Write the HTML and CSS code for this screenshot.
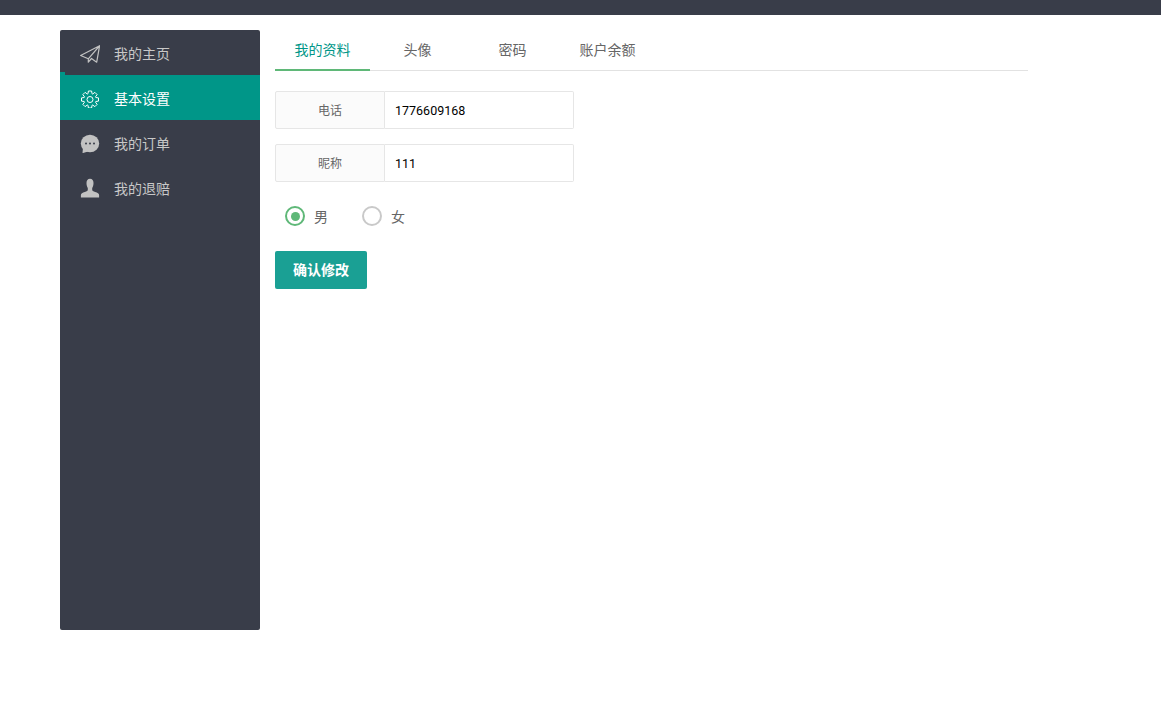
FILE: index.html
```html
<!DOCTYPE html>
<html lang="zh-CN">
<head>
    <meta charset="UTF-8">
    <title>基本设置</title>
    <link rel="stylesheet" href="styles.css">
</head>
<body>
    <div class="topbar"></div>

    <div class="wrapper">
        <ul class="side-nav">
            <li class="side-item">
                <svg class="side-icon" viewBox="0 0 20 20"><path d="M19.6 2.700 .6 12.500 8.300 15.800 19.600 2.700 16.700 19.200 11.500 15.500 8.300 19.200V15.800" fill="none" stroke="#c2c2c2" stroke-width="1.200" stroke-linejoin="round"/></svg>
                <span>我的主页</span>
            </li>
            <li class="side-item active">
                <svg class="side-icon" viewBox="0 0 20 20"><polygon transform="translate(10 11.500)" points="-2,-5.800 -1.600,-8.500 1.600,-8.500 2,-5.800 2.690,-5.510 4.880,-7.140 7.140,-4.880 5.510,-2.690 5.800,-2 8.500,-1.600 8.500,1.600 5.800,2 5.510,2.690 7.140,4.880 4.880,7.140 2.690,5.510 2,5.800 1.600,8.500 -1.600,8.500 -2,5.800 -2.690,5.510 -4.880,7.140 -7.140,4.880 -5.510,2.690 -5.800,2 -8.500,1.600 -8.500,-1.600 -5.800,-2 -5.510,-2.690 -7.140,-4.880 -4.880,-7.140 -2.690,-5.510" fill="none" stroke="#fff" stroke-width="1" stroke-linejoin="round"/><circle cx="10" cy="11.500" r="3" fill="none" stroke="#fff" stroke-width="1"/></svg>
                <span>基本设置</span>
            </li>
            <li class="side-item">
                <svg class="side-icon" viewBox="0 0 20 20"><ellipse cx="10" cy="10.500" rx="9.200" ry="8.800" fill="#c2c2c2"/><path d="M3 14.500 2.500 20.200 8 18.500Z" fill="#c2c2c2"/><circle cx="6" cy="10.500" r="1" fill="#393d49"/><circle cx="10" cy="10.500" r="1" fill="#393d49"/><circle cx="14" cy="10.500" r="1" fill="#393d49"/></svg>
                <span>我的订单</span>
            </li>
            <li class="side-item">
                <svg class="side-icon" viewBox="0 0 20 20"><path d="M10 .8c2.300 0 3.500 1.700 3.500 4.300 0 2-.5 3.800-1.300 5V12c0 .9 1 1.300 3 2 2.300.8 3.900 1.300 3.900 3v2.500H.9V17c0-1.700 1.600-2.200 3.900-3 2-.7 3-1.100 3-2v-1.900C7 8.900 6.500 7.100 6.500 5.100 6.500 2.500 7.700.8 10 .8Z" fill="#c2c2c2"/></svg>
                <span>我的退赔</span>
            </li>
        </ul>

        <div class="content">
            <ul class="tabs">
                <li class="tab current">我的资料</li>
                <li class="tab">头像</li>
                <li class="tab">密码</li>
                <li class="tab">账户余额</li>
            </ul>

            <form class="profile-form">
                <div class="field">
                    <label class="field-label">电话</label>
                    <input class="field-input" type="text" value="1776609168">
                </div>
                <div class="field">
                    <label class="field-label">昵称</label>
                    <input class="field-input" type="text" value="111">
                </div>
                <div class="radios">
                    <div class="radio checked"><i class="ring"></i><span>男</span></div>
                    <div class="radio"><i class="ring"></i><span>女</span></div>
                </div>
                <button class="submit" type="button">确认修改</button>
            </form>
        </div>
    </div>
</body>
</html>
```

FILE: styles.css
```css
* {
    box-sizing: border-box;
}
body {
    margin: 0;
    background-color: #fff;
    color: #666;
    font-family: "Noto Sans CJK SC", "Liberation Sans", sans-serif;
    font-size: 14px;
}
ul {
    list-style: none;
    margin: 0;
    padding: 0;
}
.topbar {
    height: 15px;
    background-color: #393d49;
}
.wrapper {
    display: flex;
    gap: 15px;
    padding: 15px 60px;
}
.side-nav {
    width: 200px;
    height: 600px;
    flex-shrink: 0;
    background-color: #393d49;
    border-radius: 2px;
}
.side-item {
    position: relative;
    display: flex;
    align-items: center;
    gap: 14px;
    height: 45px;
    padding-left: 20px;
    color: #c8c8c8;
}
.side-item.active {
    background-color: #009688;
    color: #fff;
}
.side-item.active::before {
    content: "";
    position: absolute;
    left: 0;
    top: -3px;
    width: 5px;
    height: 3px;
    background-color: #009688;
}
.side-icon {
    width: 20px;
    height: 20px;
    flex-shrink: 0;
}
.content {
    width: 753px;
}
.tabs {
    display: flex;
    height: 41px;
    border-bottom: 1px solid #e2e2e2;
}
.tab {
    width: 95px;
    height: 41px;
    line-height: 38px;
    text-align: center;
    color: #666;
}
.tab.current {
    color: #009688;
    border-bottom: 2px solid #5fb878;
}
.profile-form {
    padding-top: 20px;
}
.field {
    display: flex;
    width: 299px;
    height: 38px;
    margin-bottom: 15px;
}
.field-label {
    width: 110px;
    line-height: 36px;
    text-align: center;
    font-size: 12px;
    background-color: #fbfbfb;
    border: 1px solid #e6e6e6;
    border-radius: 2px 0 0 2px;
}
.field-input {
    width: 189px;
    padding: 0 10px;
    border: 1px solid #e6e6e6;
    border-left: 0;
    border-radius: 0 2px 2px 0;
    color: #000;
    font-family: Roboto, sans-serif;
    font-size: 12.5px;
    outline: none;
}
.radios {
    display: flex;
    gap: 34px;
    height: 54px;
    padding: 9px 0 0 10px;
}
.radio {
    display: flex;
    align-items: center;
    gap: 9px;
    height: 20px;
}
.ring {
    display: flex;
    align-items: center;
    justify-content: center;
    width: 20px;
    height: 20px;
    border: 2px solid #c9c9c9;
    border-radius: 50%;
}
.radio.checked .ring {
    border-color: #5fb878;
}
.radio.checked .ring::after {
    content: "";
    width: 9px;
    height: 9px;
    border-radius: 50%;
    background-color: #5fb878;
}
.submit {
    display: block;
    width: 92px;
    height: 38px;
    padding: 0 0 2px;
    border: 0;
    border-radius: 2px;
    background-color: #1aa094;
    color: #fff;
    font-family: inherit;
    font-size: 14px;
    font-weight: 700;
}
```
